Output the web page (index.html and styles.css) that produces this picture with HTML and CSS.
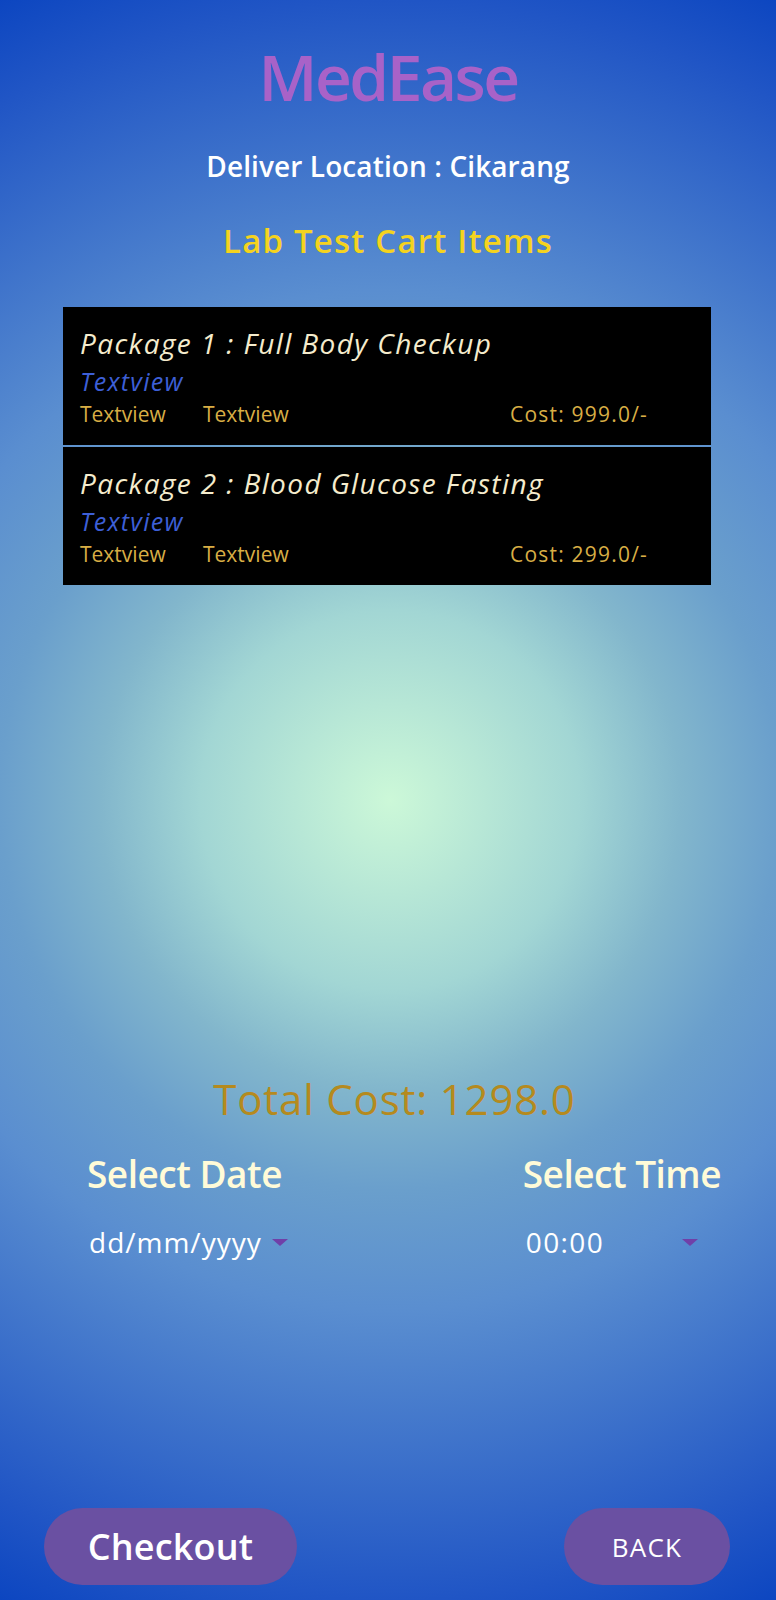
FILE: index.html
```html
<!DOCTYPE html>
<html lang="en">
<head>
<meta charset="utf-8">
<title>MedEase - Lab Test Cart</title>
<link rel="stylesheet" href="styles.css">
</head>
<body>
<div class="page">
  <h1 class="brand">MedEase</h1>
  <p class="location">Deliver Location : Cikarang</p>
  <h2 class="section-title">Lab Test Cart Items</h2>

  <div class="cart-area">
    <ul class="cart-list">
      <li class="cart-item">
        <div class="item-title">Package 1 : Full Body Checkup</div>
        <div class="item-sub">Textview</div>
        <div class="item-meta">
          <span>Textview</span>
          <span>Textview</span>
          <span class="item-cost">Cost: 999.0/-</span>
        </div>
      </li>
      <li class="cart-item">
        <div class="item-title">Package 2 : Blood Glucose Fasting</div>
        <div class="item-sub">Textview</div>
        <div class="item-meta">
          <span>Textview</span>
          <span>Textview</span>
          <span class="item-cost">Cost: 299.0/-</span>
        </div>
      </li>
    </ul>
  </div>

  <p class="total">Total Cost: 1298.0</p>

  <div class="schedule">
    <div class="schedule-col date-col">
      <div class="schedule-label">Select Date</div>
      <div class="spinner date-spinner"><span>dd/mm/yyyy</span><i class="caret"></i></div>
    </div>
    <div class="schedule-col time-col">
      <div class="schedule-label">Select Time</div>
      <div class="spinner time-spinner"><span>00:00</span><i class="caret"></i></div>
    </div>
  </div>

  <div class="actions">
    <button class="btn btn-checkout">Checkout</button>
    <button class="btn btn-back">BACK</button>
  </div>
</div>
</body>
</html>
```
FILE: styles.css
```css
html, body {
  margin: 0;
  padding: 0;
}
body {
  font-family: "Open Sans", "Noto Sans", sans-serif;
  background: #0a44c0;
}
.page {
  width: 776px;
  height: 1600px;
  box-sizing: border-box;
  display: flex;
  flex-direction: column;
  background: radial-gradient(circle 900px at 390px 800px,
    #ccf8d8 0px, #a2d6d4 190px, #82b6cc 290px, #6a9fcc 390px,
    #5a8ed0 510px, #2055c5 800px, #0a44c0 900px);
  overflow: hidden;
  padding-bottom: 15px;
}
.brand {
  margin: 45px 0 0;
  font-size: 64px;
  line-height: 1;
  font-weight: 600;
  color: #a862c8;
  text-align: center;
  letter-spacing: -2.5px;
}
.location {
  margin: 43px 0 0;
  font-size: 28px;
  line-height: 1;
  font-weight: 600;
  color: #ffffff;
  text-align: center;
  letter-spacing: 0.1px;
}
.section-title {
  margin: 44px 0 0;
  font-size: 33px;
  line-height: 1;
  font-weight: 600;
  color: #f5d31e;
  text-align: center;
  letter-spacing: 1.2px;
}
.cart-area {
  margin-top: 50px;
  height: 771px;
}
.cart-list {
  list-style: none;
  margin: 0 0 0 63px;
  padding: 0;
  width: 648px;
}
.cart-item {
  height: 138px;
  box-sizing: border-box;
  background: #000;
  padding: 22px 0 0 17px;
}
.cart-item + .cart-item {
  margin-top: 2px;
}
.item-title {
  font-size: 28px;
  line-height: 1;
  font-style: italic;
  color: #f5eccd;
  letter-spacing: 1.4px;
}
.item-sub {
  margin-top: 12px;
  font-size: 25px;
  line-height: 1;
  font-style: italic;
  color: #3d5fd6;
  letter-spacing: 1.3px;
}
.item-meta {
  margin-top: 10px;
  display: grid;
  grid-template-columns: 123px 1fr auto;
  padding-right: 63px;
  font-size: 21px;
  line-height: 1;
  color: #d8ae45;
}
.item-cost {
  letter-spacing: 1.2px;
}
.total {
  margin: 0;
  font-size: 42px;
  line-height: 1;
  color: #b58a1e;
  text-align: center;
  padding-left: 13px;
  letter-spacing: 0.8px;
}
.schedule {
  margin-top: 35px;
  display: flex;
  justify-content: space-between;
  padding: 0 55px 0 87px;
}
.schedule-col {
  display: flex;
  flex-direction: column;
}
.schedule-label {
  font-size: 37px;
  line-height: 1;
  font-weight: 600;
  color: #fffbd8;
  letter-spacing: -0.5px;
}
.spinner {
  margin-top: 36px;
  display: flex;
  align-items: center;
  font-size: 28px;
  line-height: 1;
  font-weight: 500;
  color: #ffffff;
  padding-left: 2px;
  letter-spacing: 1px;
}
.date-spinner {
  gap: 10px;
}
.time-spinner {
  width: 172px;
  justify-content: space-between;
  padding-left: 3px;
  letter-spacing: 1.4px;
}
.caret {
  display: block;
  width: 0;
  height: 0;
  border-left: 8px solid transparent;
  border-right: 8px solid transparent;
  border-top: 7px solid #7040a8;
}
.actions {
  margin-top: auto;
  display: flex;
  justify-content: space-between;
  padding: 0 46px 0 44px;
}
.btn {
  height: 77px;
  border: none;
  border-radius: 39px;
  background: #6a50a2;
  color: #ffffff;
  font-family: inherit;
  padding: 0;
}
.btn-checkout {
  width: 253px;
  font-size: 36px;
  font-weight: 600;
  letter-spacing: 0.2px;
}
.btn-back {
  width: 166px;
  font-size: 26px;
  font-weight: 500;
  letter-spacing: 1.2px;
}
```
